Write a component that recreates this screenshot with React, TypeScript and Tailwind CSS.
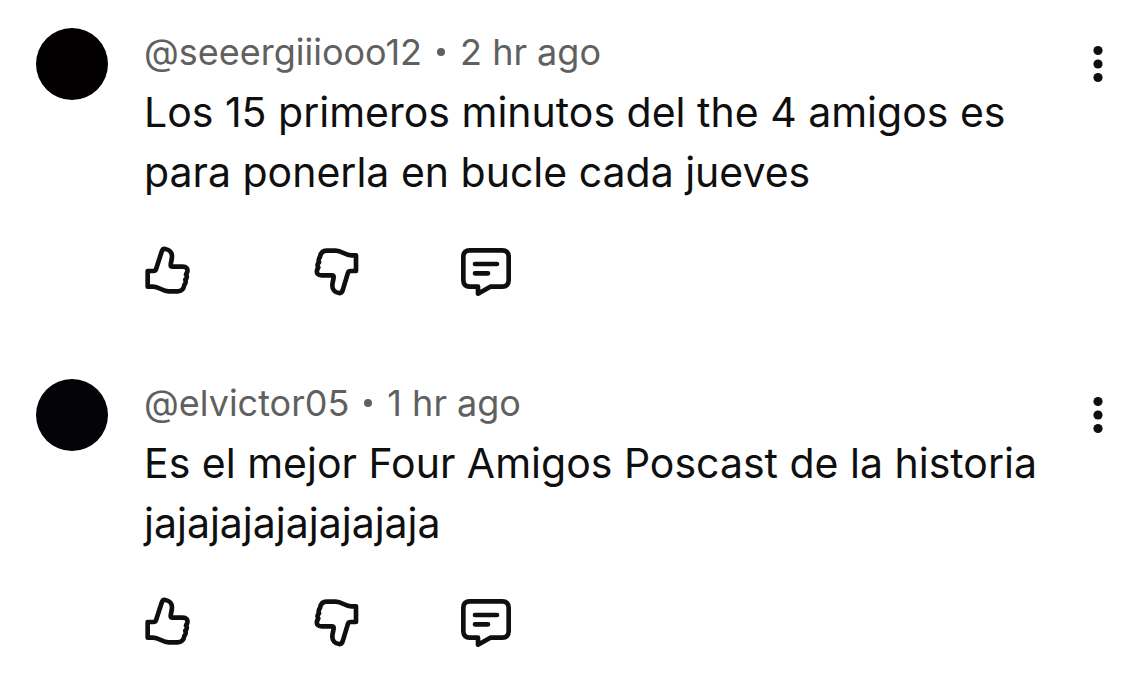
import { ReactNode } from "react";
import { clsx } from "clsx";

interface Comment {
  id: number;
  author: string;
  time: string;
  text: string;
  avatarClassName: string;
}

const comments: Comment[] = [
  {
    id: 1,
    author: "@seeergiiiooo12",
    time: "2 hr ago",
    text: "Los 15 primeros minutos del the 4 amigos es para ponerla en bucle cada jueves",
    avatarClassName: "bg-[#020001]",
  },
  {
    id: 2,
    author: "@elvictor05",
    time: "1 hr ago",
    text: "Es el mejor Four Amigos Poscast de la historia jajajajajajajajaja",
    avatarClassName: "bg-[#040308]",
  },
];

function LikeIcon() {
  return (
    <svg viewBox="24 30 150 150" className="size-[50px]" fill="none" stroke="currentColor" strokeWidth="14" strokeLinejoin="round" aria-hidden="true">
      <path d="M35 105H52C56 105 59 103 60 100L77 47C79 41 83 38 88 39C101 41 108 50 108 61C108 72 104 80 104 87C104 91 106 92 110 92H140C151 92 156 98 154 107C153 111 151 113 150 116C154 121 153 127 148 131C150 137 149 143 145 147C143 160 136 166 125 166H98C79 166 70 152 51 152H35Z" />
    </svg>
  );
}

function DislikeIcon() {
  return (
    <svg viewBox="27 30 150 150" className="size-[50px]" fill="none" stroke="currentColor" strokeWidth="14" strokeLinejoin="round" aria-hidden="true">
      <path d="M156 105H140C136 105 133 107 132 110L116 163C114 169 110 172 105 171C92 169 85 160 85 149C85 138 89 130 89 123C89 119 87 118 83 118H53C42 118 37 112 39 103C40 99 42 97 43 94C39 89 40 83 45 79C43 73 44 67 48 63C50 50 57 44 68 44H95C114 44 123 58 142 58H156Z" />
    </svg>
  );
}

function ReplyIcon() {
  return (
    <svg viewBox="24 30 156 156" className="size-[52px]" fill="none" stroke="currentColor" strokeWidth="14" strokeLinecap="round" strokeLinejoin="round" aria-hidden="true">
      <path d="M53 43H151C163 43 170 50 170 62V133C170 145 163 152 151 152H115L78 173V152H53C41 152 34 145 34 133V62C34 50 41 43 53 43Z" />
      <path d="M69 84H135M69 112H108" />
    </svg>
  );
}

function MoreIcon() {
  return (
    <svg viewBox="0 0 12 40" className="h-10 w-3" fill="currentColor" aria-hidden="true">
      <circle cx="6" cy="6.5" r="4.6" />
      <circle cx="6" cy="20" r="4.6" />
      <circle cx="6" cy="33.5" r="4.6" />
    </svg>
  );
}

interface IconButtonProps {
  label: string;
  className?: string;
  children: ReactNode;
}

function IconButton({ label, className, children }: IconButtonProps) {
  return (
    <button type="button" aria-label={label} className={clsx("shrink-0 cursor-pointer", className)}>
      {children}
    </button>
  );
}

function CommentItem({ comment }: { comment: Comment }) {
  return (
    <article className="flex items-start gap-9">
      <div className={clsx("size-[72px] shrink-0 rounded-full", comment.avatarClassName)} />
      <div className="min-w-0 flex-1">
        <div className="flex items-center text-[36px] leading-[48px] text-[#606060]">
          <a href="#">{comment.author}</a>
          <span className="mx-[15px] size-2 rounded-full bg-[#606060]" />
          <span>{comment.time}</span>
        </div>
        <p className="mt-1.5 text-[41px] leading-[60px]">{comment.text}</p>
        <div className="mt-11 flex items-start">
          <IconButton label="Like">
            <LikeIcon />
          </IconButton>
          <IconButton label="Dislike" className="ml-[119px]">
            <DislikeIcon />
          </IconButton>
          <IconButton label="Reply" className="ml-[97px]">
            <ReplyIcon />
          </IconButton>
        </div>
      </div>
      <IconButton label="More options" className="mt-4">
        <MoreIcon />
      </IconButton>
    </article>
  );
}

export default function App() {
  return (
    <main className="flex min-h-screen flex-col gap-[81px] bg-white pt-7 pr-8 pl-9 font-['Inter','Liberation_Sans',sans-serif] text-[#0f0f0f]">
      {comments.map((comment) => (
        <CommentItem key={comment.id} comment={comment} />
      ))}
    </main>
  );
}
